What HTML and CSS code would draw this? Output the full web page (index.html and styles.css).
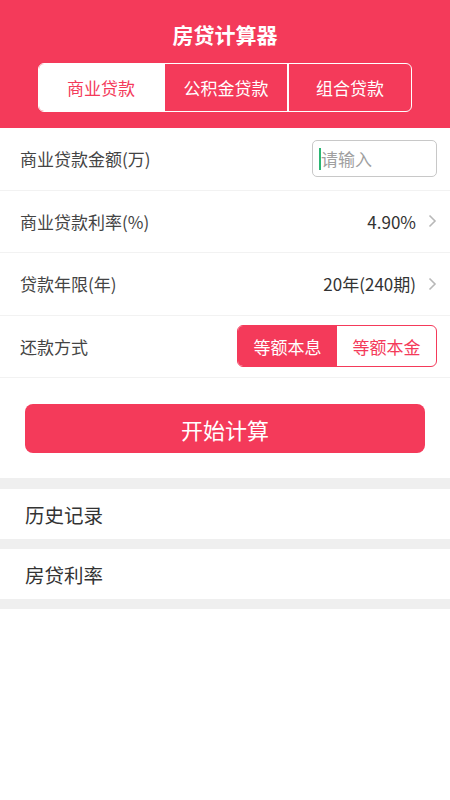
FILE: index.html
```html
<!DOCTYPE html>
<html lang="zh-CN">
<head>
<meta charset="utf-8">
<title>房贷计算器</title>
<link rel="stylesheet" href="styles.css">
</head>
<body>
<header class="header">
  <h1 class="title">房贷计算器</h1>
  <div class="tabs">
    <div class="tab active">商业贷款</div>
    <div class="tab">公积金贷款</div>
    <div class="tab">组合贷款</div>
  </div>
</header>
<section class="form">
  <div class="row">
    <span class="label">商业贷款金额(万)</span>
    <div class="input"><span class="cursor"></span><span class="placeholder">请输入</span></div>
  </div>
  <div class="row">
    <span class="label">商业贷款利率(%)</span>
    <span class="value">4.90%<svg class="chev" width="9" height="14" viewBox="0 0 9 14"><path d="M1.5 1.5 L7 7 L1.5 12.5" fill="none" stroke="#b8b8b8" stroke-width="1.6"/></svg></span>
  </div>
  <div class="row">
    <span class="label">贷款年限(年)</span>
    <span class="value">20年(240期)<svg class="chev" width="9" height="14" viewBox="0 0 9 14"><path d="M1.5 1.5 L7 7 L1.5 12.5" fill="none" stroke="#b8b8b8" stroke-width="1.6"/></svg></span>
  </div>
  <div class="row">
    <span class="label">还款方式</span>
    <div class="seg">
      <div class="seg-item on">等额本息</div>
      <div class="seg-item">等额本金</div>
    </div>
  </div>
</section>
<div class="btn-wrap">
  <div class="btn">开始计算</div>
</div>
<div class="gap first"></div>
<div class="link">历史记录</div>
<div class="gap"></div>
<div class="link">房贷利率</div>
<div class="gap"></div>
</body>
</html>
```
FILE: styles.css
```css
* { box-sizing: border-box; }
html, body { margin: 0; padding: 0; background: #fff; }
body {
  font-family: "Noto Sans CJK SC", "Noto Sans", sans-serif;
  color: #333;
  width: 450px;
}
.header {
  background: #f43a5a;
  padding: 19px 0 16px;
}
.title {
  margin: 0;
  text-align: center;
  color: #fff;
  font-size: 21px;
  font-weight: 700;
  line-height: 30px;
}
.tabs {
  margin: 14px 38px 0;
  height: 49px;
  display: grid;
  grid-template-columns: 124px 124px 1fr;
  border: 1.5px solid #fff;
  border-radius: 6px;
  overflow: hidden;
}
.tab {
  display: flex;
  align-items: center;
  justify-content: center;
  color: #fff;
  font-size: 17px;
  border-left: 2px solid #fff;
}
.tab:first-child { border-left: none; }
.tab.active { background: #fff; color: #f43a5a; }
.row {
  height: 62.5px;
  border-bottom: 1px solid #f2f2f2;
  display: flex;
  align-items: center;
  justify-content: space-between;
  padding: 0 13px 0 20px;
}
.label { font-size: 17px; color: #444; }
.value {
  font-size: 17px;
  color: #333;
  display: flex;
  align-items: center;
}
.chev { margin-left: 12px; }
.input {
  width: 125px;
  height: 37px;
  border: 1px solid #c8c8c8;
  border-radius: 5px;
  display: flex;
  align-items: center;
  padding-left: 6px;
}
.cursor {
  width: 2px;
  height: 22px;
  background: #2bb673;
}
.placeholder { font-size: 17px; color: #a0a0a0; }
.seg {
  display: flex;
  width: 200px;
  height: 42px;
  border: 1.5px solid #f43a5a;
  border-radius: 6px;
  overflow: hidden;
}
.seg-item {
  flex: 1;
  display: flex;
  align-items: center;
  justify-content: center;
  font-size: 17px;
  color: #f43a5a;
}
.seg-item.on { background: #f43a5a; color: #fff; }
.btn-wrap { padding: 26px 25px 25px; }
.btn {
  height: 49px;
  border-radius: 8px;
  background: #f43a5a;
  color: #fff;
  font-size: 22px;
  display: flex;
  align-items: center;
  justify-content: center;
}
.gap { height: 10px; background: #efefef; }
.gap.first { height: 11px; }
.link {
  height: 50px;
  display: flex;
  align-items: center;
  padding-left: 25px;
  font-size: 19.5px;
  color: #333;
}
```
